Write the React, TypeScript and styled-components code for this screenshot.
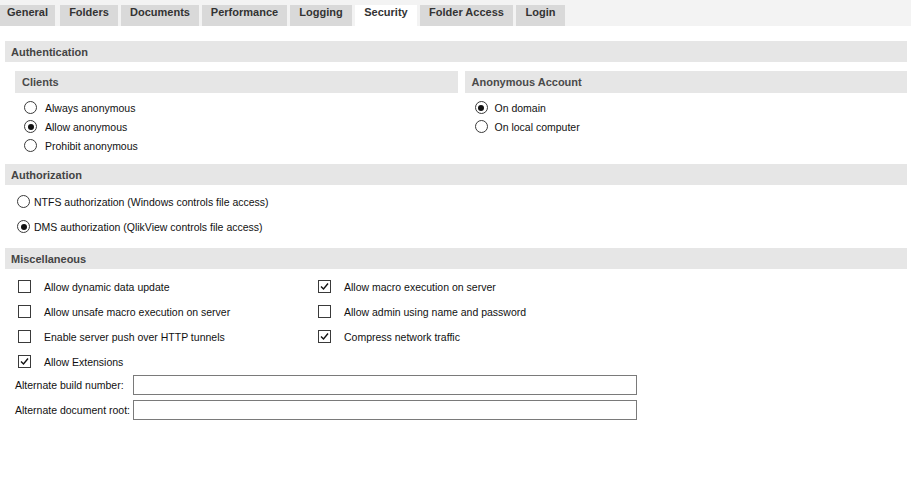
import React from "react";
import styled, { createGlobalStyle } from "styled-components";

const Global = createGlobalStyle`
  html, body { margin: 0; padding: 0; background: #fff; }
  body {
    font-family: "Liberation Sans", Arial, sans-serif;
    color: #000;
    width: 911px;
    height: 492px;
    overflow: hidden;
  }
`;

const TabBar = styled.div`
  display: flex;
  gap: 3px;
  height: 26px;
  padding-top: 5px;
  box-sizing: border-box;
  background: #f3f3f3;
`;

const Tab = styled.div<{ $w: number; $active?: boolean; $extra?: number }>`
  width: ${(p) => p.$w}px;
  margin-right: ${(p) => p.$extra ?? 0}px;
  height: 21px;
  box-sizing: border-box;
  padding-top: 1px;
  text-align: center;
  font-size: 11px;
  font-weight: bold;
  line-height: 12px;
  color: #333;
  background: ${(p) => (p.$active ? "#fff" : "#d9d9d9")};
`;

const Page = styled.div`
  padding: 15px 4px 0 5px;
`;

const SectionHeader = styled.div<{ $top?: number }>`
  margin-top: ${(p) => p.$top ?? 0}px;
  height: 21px;
  line-height: 22px;
  background: #e6e6e6;
  padding-left: 6px;
  font-size: 11px;
  font-weight: bold;
  color: #444;
`;

const SubGrid = styled.div`
  display: grid;
  grid-template-columns: 1fr 1fr;
  column-gap: 7px;
  margin-top: 9px;
  padding-left: 10px;
`;

const SubHeader = styled.div`
  height: 22px;
  line-height: 22px;
  background: #e6e6e6;
  padding-left: 7px;
  font-size: 11px;
  font-weight: bold;
  color: #4a4a4a;
`;

const OptionList = styled.div<{ $top: number; $indent: number }>`
  display: flex;
  flex-direction: column;
  margin-top: ${(p) => p.$top}px;
  padding-left: ${(p) => p.$indent}px;
`;

const OptionRow = styled.label<{ $h: number; $gap: number }>`
  display: flex;
  align-items: center;
  gap: ${(p) => p.$gap}px;
  height: ${(p) => p.$h}px;
  font-size: 10.5px;
  color: #111;
  white-space: nowrap;
`;

const RadioCircle = styled.span<{ $on?: boolean }>`
  position: relative;
  width: 13px;
  height: 13px;
  box-sizing: border-box;
  border: 1px solid #3a3a3a;
  border-radius: 50%;
  background: #fff;
  flex: none;
  &::after {
    content: "";
    display: ${(p) => (p.$on ? "block" : "none")};
    position: absolute;
    left: 2.5px;
    top: 2.5px;
    width: 6px;
    height: 6px;
    border-radius: 50%;
    background: #111;
  }
`;

const Box = styled.span`
  width: 13px;
  height: 13px;
  box-sizing: border-box;
  border: 1px solid #3a3a3a;
  background: #fff;
  flex: none;
  display: flex;
  align-items: center;
  justify-content: center;
`;

const MiscGrid = styled.div`
  display: grid;
  grid-template-columns: 300px 300px;
  margin-top: 5px;
`;

const CheckCell = styled.label`
  display: flex;
  align-items: center;
  gap: 13px;
  height: 25px;
  padding-left: 13px;
  font-size: 10.5px;
  color: #111;
  white-space: nowrap;
`;

const FieldGrid = styled.div`
  display: grid;
  grid-template-columns: 118px 504px;
  padding-left: 10px;
  margin-top: 1px;
`;

const FieldLabel = styled.div`
  height: 25px;
  line-height: 20px;
  font-size: 10.5px;
  color: #111;
  white-space: nowrap;
`;

const FieldInput = styled.input`
  height: 20px;
  box-sizing: border-box;
  border: 1px solid #7a7a7a;
  margin: 0;
  padding: 0 3px;
  font-family: "Liberation Sans", Arial, sans-serif;
  font-size: 11px;
  background: #fff;
`;

const Radio = ({ on, label, h, gap }: { on?: boolean; label: string; h: number; gap: number }) => (
  <OptionRow $h={h} $gap={gap}>
    <RadioCircle $on={on} />
    {label}
  </OptionRow>
);

const Check = ({ on, label }: { on?: boolean; label?: string }) =>
  label ? (
    <CheckCell>
      <Box>
        {on && (
          <svg width="9" height="9" viewBox="0 0 9 9">
            <path d="M1 4.5 L3.5 7 L8 1.5" fill="none" stroke="#111" strokeWidth="1.4" />
          </svg>
        )}
      </Box>
      {label}
    </CheckCell>
  ) : (
    <div />
  );

const tabs = [
  { name: "General", w: 55, extra: 2 },
  { name: "Folders", w: 58 },
  { name: "Documents", w: 78 },
  { name: "Performance", w: 85 },
  { name: "Logging", w: 62 },
  { name: "Security", w: 62, active: true },
  { name: "Folder Access", w: 93 },
  { name: "Login", w: 49 },
];

const misc: { label?: string; on?: boolean }[] = [
  { label: "Allow dynamic data update" },
  { label: "Allow macro execution on server", on: true },
  { label: "Allow unsafe macro execution on server" },
  { label: "Allow admin using name and password" },
  { label: "Enable server push over HTTP tunnels" },
  { label: "Compress network traffic", on: true },
  { label: "Allow Extensions", on: true },
  {},
];

export default function App() {
  return (
    <>
      <Global />
      <TabBar>
        {tabs.map((t) => (
          <Tab key={t.name} $w={t.w} $active={t.active} $extra={t.extra}>
            {t.name}
          </Tab>
        ))}
      </TabBar>
      <Page>
        <SectionHeader>Authentication</SectionHeader>
        <SubGrid>
          <div>
            <SubHeader>Clients</SubHeader>
            <OptionList $top={5} $indent={9}>
              <Radio h={19} gap={8} label="Always anonymous" />
              <Radio h={19} gap={8} on label="Allow anonymous" />
              <Radio h={19} gap={8} label="Prohibit anonymous" />
            </OptionList>
          </div>
          <div>
            <SubHeader>Anonymous Account</SubHeader>
            <OptionList $top={5} $indent={10}>
              <Radio h={19} gap={7} on label="On domain" />
              <Radio h={19} gap={7} label="On local computer" />
            </OptionList>
          </div>
        </SubGrid>
        <SectionHeader $top={9}>Authorization</SectionHeader>
        <OptionList $top={4} $indent={12}>
          <Radio h={25} gap={4} label="NTFS authorization (Windows controls file access)" />
          <Radio h={25} gap={4} on label="DMS authorization (QlikView controls file access)" />
        </OptionList>
        <SectionHeader $top={9}>Miscellaneous</SectionHeader>
        <MiscGrid>
          {misc.map((m, i) => (
            <Check key={i} on={m.on} label={m.label} />
          ))}
        </MiscGrid>
        <FieldGrid>
          <FieldLabel>Alternate build number:</FieldLabel>
          <FieldInput />
          <FieldLabel>Alternate document root:</FieldLabel>
          <FieldInput />
        </FieldGrid>
      </Page>
    </>
  );
}
